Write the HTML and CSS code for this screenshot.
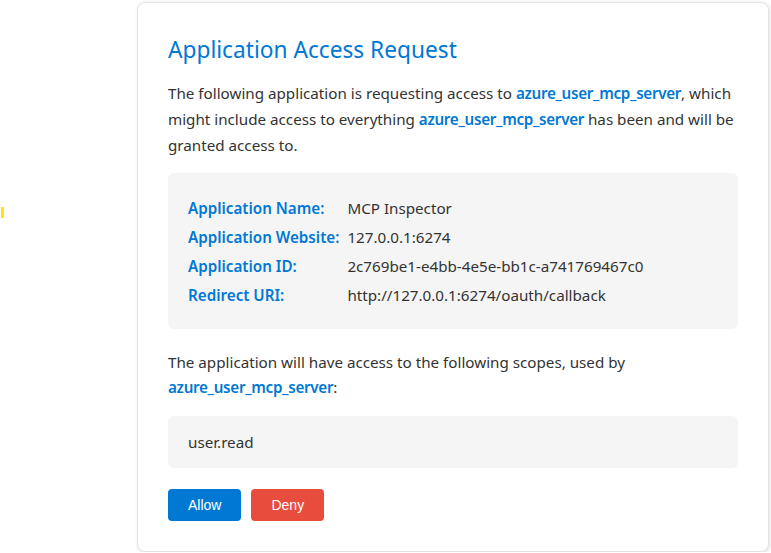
FILE: index.html
```html
<!DOCTYPE html>
<html lang="en">
<head>
<meta charset="utf-8">
<title>Application Access Request</title>
<link rel="stylesheet" href="styles.css">
</head>
<body>
<div class="page">
  <div class="marker"></div>
  <div class="card">
    <h1 class="title">Application Access Request</h1>
    <p class="intro">The following application is requesting access to <span class="hl">azure_user_mcp_server</span>, which might include access to everything <span class="hl">azure_user_mcp_server</span> has been and will be granted access to.</p>
    <div class="info">
      <table class="info-table">
        <tr><th>Application Name:</th><td>MCP Inspector</td></tr>
        <tr><th>Application Website:</th><td>127.0.0.1:6274</td></tr>
        <tr><th>Application ID:</th><td>2c769be1-e4bb-4e5e-bb1c-a741769467c0</td></tr>
        <tr><th>Redirect URI:</th><td>http://127.0.0.1:6274/oauth/callback</td></tr>
      </table>
    </div>
    <p class="scopes-intro">The application will have access to the following scopes, used by <span class="hl">azure_user_mcp_server</span>:</p>
    <div class="scopes">user.read</div>
    <div class="actions">
      <button class="btn btn-allow">Allow</button>
      <button class="btn btn-deny">Deny</button>
    </div>
  </div>
</div>
</body>
</html>
```
FILE: styles.css
```css
html, body {
  margin: 0;
  padding: 0;
  background: #ffffff;
}
body {
  font-family: "Noto Sans", "Open Sans", sans-serif;
  color: #333333;
}
.page {
  display: flex;
  align-items: flex-start;
  padding-top: 2px;
}
.marker {
  width: 3px;
  height: 11px;
  background: #ffe500;
  margin: 205px 0 0 1px;
  flex: none;
}
.card {
  margin-left: 133px;
  width: 570px;
  padding: 30px;
  border: 1px solid #e4e4e4;
  border-radius: 8px;
  box-shadow: 1px 1px 4px rgba(0,0,0,0.12);
  background: #fff;
  flex: none;
}
.title {
  margin: 0;
  font-size: 22.7px;
  line-height: 33px;
  font-weight: 400;
  color: #0078d4;
}
.intro {
  margin: 14px 0 0;
  font-size: 15.2px;
  line-height: 26px;
}
.hl {
  color: #0078d4;
  font-weight: 600;
  letter-spacing: -0.3px;
}
.info {
  margin-top: 15px;
  background: #f5f5f5;
  border-radius: 6px;
  padding: 20px;
}
.info-table {
  border-collapse: collapse;
  font-size: 15.2px;
}
.info-table th,
.info-table td {
  padding: 0;
  height: 29px;
  text-align: left;
  vertical-align: middle;
}
.info-table th {
  color: #0078d4;
  font-weight: 600;
  padding-right: 8px;
  white-space: nowrap;
}
.scopes-intro {
  margin: 21px 0 0;
  font-size: 15.2px;
  line-height: 25px;
}
.scopes {
  margin-top: 16px;
  background: #f5f5f5;
  border-radius: 6px;
  padding: 15px 20px;
  font-size: 15.2px;
  line-height: 22px;
}
.actions {
  display: flex;
  gap: 10px;
  margin-top: 21px;
}
.btn {
  height: 32px;
  padding: 0 20px;
  border: none;
  border-radius: 4px;
  color: #fff;
  font-family: "Liberation Sans", Arial, sans-serif;
  font-size: 14px;
  cursor: pointer;
}
.btn-allow { background: #0078d4; }
.btn-deny { background: #e74c3c; }
```
